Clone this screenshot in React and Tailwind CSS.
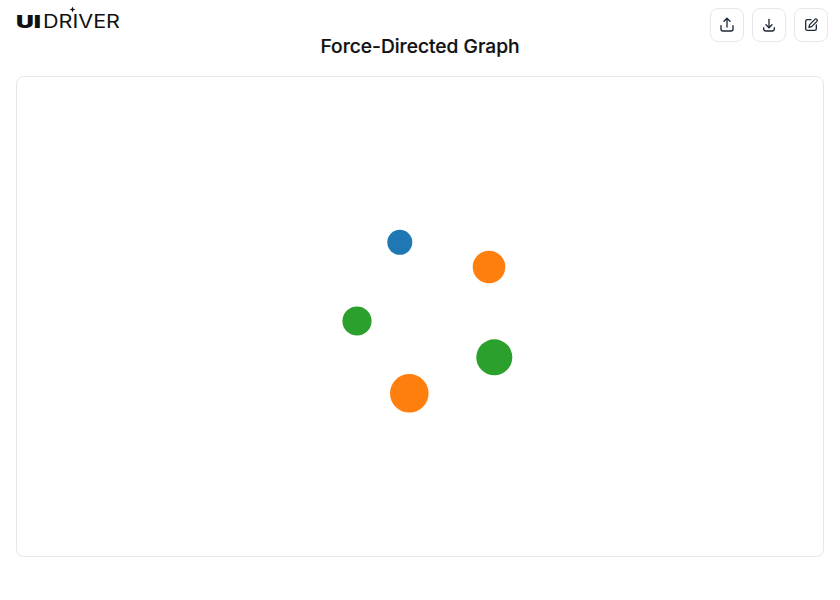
import React from "react";

function Logo() {
  return (
    <svg width="106" height="26" viewBox="0 0 106 26" className="block">
      <text x="0" y="23" textLength="25" lengthAdjust="spacingAndGlyphs" fontFamily="Inter, sans-serif" fontWeight="900" fontSize="18" fill="#111">UI</text>
      <text x="27" y="23" textLength="77" lengthAdjust="spacingAndGlyphs" fontFamily="Inter, sans-serif" fontWeight="400" fontSize="18" fill="#111">DRIVER</text>
      <path d="M56.5 1.5 L57.3 3.7 L59.5 4.5 L57.3 5.3 L56.5 7.5 L55.7 5.3 L53.5 4.5 L55.7 3.7 Z" fill="#111" />
    </svg>
  );
}

function UploadIcon() {
  return (
    <svg width="16" height="16" viewBox="0 0 24 24" fill="none" stroke="#1f2937" strokeWidth="2" strokeLinecap="round" strokeLinejoin="round">
      <path d="M3 13v5a3 3 0 0 0 3 3h12a3 3 0 0 0 3-3v-5" />
      <path d="M16.5 6.5 12 2 7.5 6.5" />
      <path d="M12 2v13" />
    </svg>
  );
}

function DownloadIcon() {
  return (
    <svg width="16" height="16" viewBox="0 0 24 24" fill="none" stroke="#1f2937" strokeWidth="2" strokeLinecap="round" strokeLinejoin="round">
      <path d="M4 16v1.5A3.5 3.5 0 0 0 7.500 21h9a3.500 3.500 0 0 0 3.500-3.500V16" />
      <path d="M7.500 11.500 12 16l4.500-4.500" />
      <path d="M12 16V3.500" />
    </svg>
  );
}

function EditIcon() {
  return (
    <svg width="16" height="16" viewBox="0 0 24 24" fill="none" stroke="#1f2937" strokeWidth="2" strokeLinecap="round" strokeLinejoin="round">
      <path d="M12 4H6.500A2.500 2.500 0 0 0 4 6.500v11A2.500 2.500 0 0 0 6.500 20h11a2.500 2.500 0 0 0 2.500-2.500V12" />
      <path d="M17.800 3.600a2.100 2.100 0 0 1 3 3L13 14.400l-4 1 1-4z" />
    </svg>
  );
}

const btn = "w-[34px] h-[34px] flex items-center justify-center rounded-lg border border-gray-200 bg-white";

export default function App() {
  return (
    <div className="w-[840px] h-[600px] bg-white flex flex-col font-['Inter',sans-serif] overflow-hidden">
      <div className="relative h-[76px] shrink-0">
        <div className="absolute left-[16px] top-[5px]"><Logo /></div>
        <div className="absolute right-[12px] top-[8px] flex gap-2">
          <div className={btn}><UploadIcon /></div>
          <div className={btn}><DownloadIcon /></div>
          <div className={btn}><EditIcon /></div>
        </div>
        <h1 className="pt-[33px] text-center text-[19.2px] leading-[26px] font-medium text-[#111111] [-webkit-text-stroke:0.2px_#111111]">Force-Directed Graph</h1>
      </div>
      <div className="mx-4 h-[481px] rounded-lg border border-gray-200 relative">
        <svg width="806" height="479" className="block">
          <circle cx="382.8" cy="165.3" r="12.5" fill="#1f77b4" />
          <circle cx="472" cy="190" r="16.3" fill="#ff7f0e" />
          <circle cx="340" cy="244" r="14.6" fill="#2ca02c" />
          <circle cx="477.3" cy="280.3" r="18" fill="#2ca02c" />
          <circle cx="392.3" cy="316.3" r="19.3" fill="#ff7f0e" />
        </svg>
      </div>
    </div>
  );
}
